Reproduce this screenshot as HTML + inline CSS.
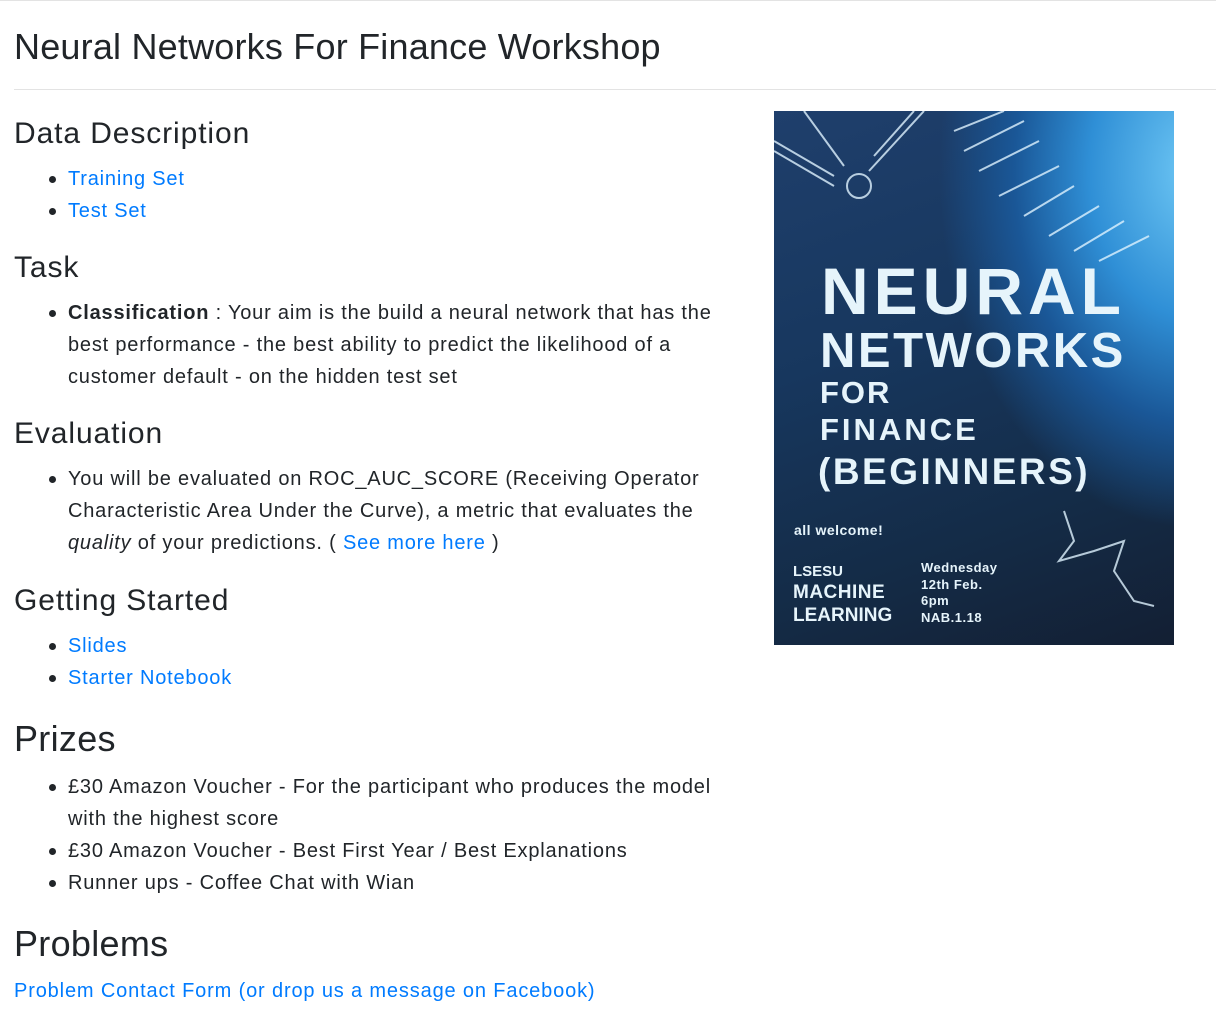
<!DOCTYPE html>
<html><head><meta charset="utf-8"><style>
body{margin:0;width:1216px;height:1026px;background:#fff;font-family:"Liberation Sans",Helvetica,Arial,sans-serif;color:#212529;position:relative;overflow:hidden}
.t{position:absolute;left:14px;white-space:nowrap;font-size:20px;line-height:32px;letter-spacing:0.8px}
.li{left:68px}
.li:before{content:"";position:absolute;left:-19px;top:13px;width:7px;height:7px;border-radius:50%;background:#212529}
.h3{font-size:30px;line-height:40px;letter-spacing:0.9px}
.h2{font-size:36px;line-height:44px;letter-spacing:0.3px}
a{color:#007bff;text-decoration:none}
.poster{position:absolute;left:774px;top:111px;width:400px;height:534px;overflow:hidden;
background:radial-gradient(ellipse 300px 420px at 420px 60px,#6fc8f5 0%,#2f8fd6 35%,#1a5797 60%,rgba(20,50,90,0) 85%),linear-gradient(160deg,#1f3f6c 0%,#17375e 40%,#142b46 75%,#131f33 100%)}
.poster div{position:absolute;color:#e6f4fb;font-weight:bold;white-space:nowrap;font-family:"Liberation Sans",sans-serif}
</style></head><body>
<div style="position:absolute;left:0;top:0;width:1216px;height:1px;background:#e3e3e3"></div>
<div class="t h2" style="top:25px;letter-spacing:0.2px">Neural Networks For Finance Workshop</div>
<div style="position:absolute;left:14px;top:89px;width:1202px;height:1px;background:#e3e3e3"></div>
<div class="t h3" style="top:114px">Data Description</div>
<div class="t li" style="top:163px"><a>Training Set</a></div>
<div class="t li" style="top:195px"><a>Test Set</a></div>
<div class="t h3" style="top:248px">Task</div>
<div class="t li" style="top:297px"><b>Classification</b> : Your aim is the build a neural network that has the</div>
<div class="t" style="left:68px;top:329px">best performance - the best ability to predict the likelihood of a</div>
<div class="t" style="left:68px;top:361px">customer default - on the hidden test set</div>
<div class="t h3" style="top:414px">Evaluation</div>
<div class="t li" style="top:463px">You will be evaluated on ROC_AUC_SCORE (Receiving Operator</div>
<div class="t" style="left:68px;top:495px">Characteristic Area Under the Curve), a metric that evaluates the</div>
<div class="t" style="left:68px;top:527px"><i>quality</i> of your predictions. ( <a>See more here</a> )</div>
<div class="t h3" style="top:581px">Getting Started</div>
<div class="t li" style="top:630px"><a>Slides</a></div>
<div class="t li" style="top:662px"><a>Starter Notebook</a></div>
<div class="t h2" style="top:717px">Prizes</div>
<div class="t li" style="top:771px">£30 Amazon Voucher - For the participant who produces the model</div>
<div class="t" style="left:68px;top:803px">with the highest score</div>
<div class="t li" style="top:835px">£30 Amazon Voucher - Best First Year / Best Explanations</div>
<div class="t li" style="top:867px">Runner ups - Coffee Chat with Wian</div>
<div class="t h2" style="top:922px">Problems</div>
<div class="t" style="top:975px;letter-spacing:0.85px"><a>Problem Contact Form (or drop us a message on Facebook)</a></div>

<div class="poster">
<svg width="400" height="534" style="position:absolute;left:0;top:0" fill="none" stroke="#dff3ff" stroke-width="2" opacity="0.8">
<path d="M150 0 L95 60 M140 0 L100 45"/>
<path d="M0 30 L60 65 M0 40 L60 75 M30 0 L70 55"/>
<circle cx="85" cy="75" r="12"/>
<path d="M180 20 L230 0 M190 40 L250 10 M205 60 L265 30 M225 85 L285 55 M250 105 L300 75 M275 125 L325 95 M300 140 L350 110 M325 150 L375 125"/>
<path d="M290 400 L300 430 L285 450 L320 440 L350 430 L340 460 L360 490 L380 495"/>
</svg>
<div style="left:47px;top:142px;font-size:66px;letter-spacing:5px">NEURAL</div>
<div style="left:46px;top:212px;font-size:49px;letter-spacing:2.5px">NETWORKS</div>
<div style="left:46px;top:264px;font-size:31px;letter-spacing:2px">FOR</div>
<div style="left:46px;top:301px;font-size:31px;letter-spacing:3px">FINANCE</div>
<div style="left:44px;top:340px;font-size:37px;letter-spacing:2.5px">(BEGINNERS)</div>
<div style="left:20px;top:411px;font-size:14px;letter-spacing:0.5px">all welcome!</div>
<div style="left:19px;top:452px;font-size:15px">LSESU</div>
<div style="left:19px;top:471px;font-size:19px;letter-spacing:0.5px">MACHINE</div>
<div style="left:19px;top:494px;font-size:19px">LEARNING</div>
<div style="left:147px;top:449px;font-size:13px;line-height:16.5px;letter-spacing:0.5px">Wednesday<br>12th Feb.<br>6pm<br>NAB.1.18</div>
</div>
</body></html>
